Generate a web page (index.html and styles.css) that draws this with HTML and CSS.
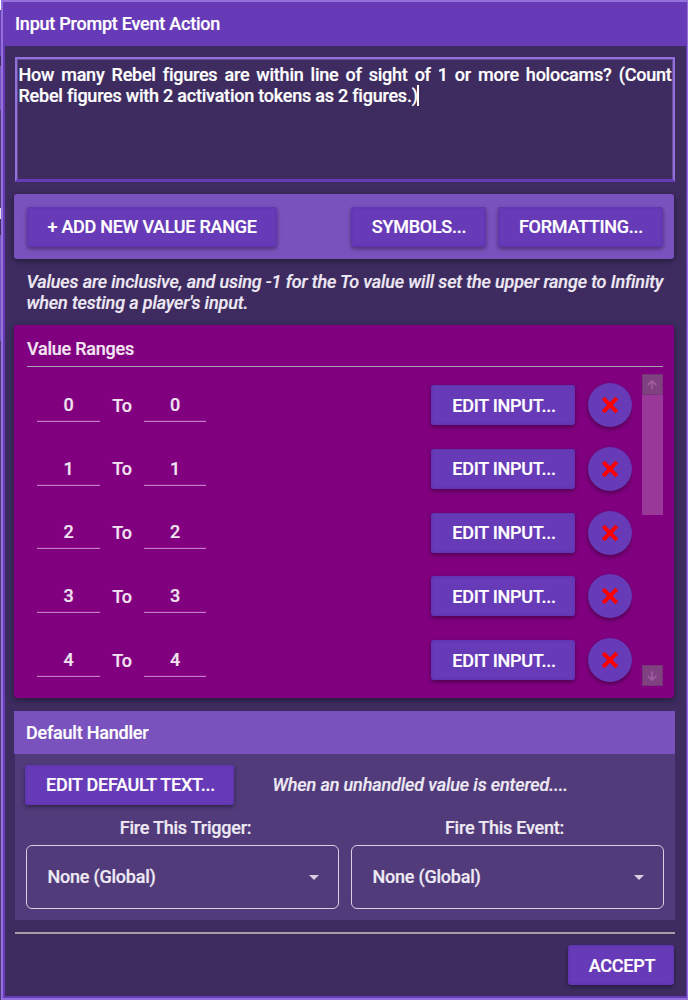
FILE: index.html
```
<!DOCTYPE html>
<html lang="en">
<head>
<meta charset="utf-8">
<title>Input Prompt Event Action</title>
<link rel="stylesheet" href="styles.css">
</head>
<body>
<div class="screen">
  <div class="backdrop"><i class="b1"></i><i class="b2"></i><i class="b3"></i><i class="b4"></i><i class="b5"></i><i class="b6"></i><i class="b7"></i><i class="b8"></i></div>
  <main class="window">
    <header class="titlebar">Input Prompt Event Action</header>
    <div class="content">
      <div class="prompt"><div class="line-justified">How many Rebel figures are within line of sight of 1 or more holocams? (Count</div><div class="line-end"><span class="prompt-end">Rebel figures with 2 activation tokens as 2 figures.)</span><span class="caret"></span></div></div>
      <section class="toolbar">
        <button class="btn add">+ ADD NEW VALUE RANGE</button>
        <button class="btn symbols">SYMBOLS...</button>
        <button class="btn formatting">FORMATTING...</button>
      </section>
      <p class="hint"><span class="hint-a">Values are inclusive, and using -1 for the To value will set the upper range to Infinity</span><br><span class="hint-b">when testing a player's input.</span></p>
      <section class="ranges">
        <h2 class="ranges-title">Value Ranges</h2>
        <div class="ranges-body">
          <div class="rows">
            <div class="row"><span class="num">0</span><span class="to">To</span><span class="num upper">0</span><button class="btn edit">EDIT INPUT...</button><button class="remove"><svg class="cross" viewBox="0 0 18 18"><path d="M2.2 2.2L15.8 15.8M15.8 2.2L2.2 15.8"/></svg></button></div>
            <div class="row"><span class="num">1</span><span class="to">To</span><span class="num upper">1</span><button class="btn edit">EDIT INPUT...</button><button class="remove"><svg class="cross" viewBox="0 0 18 18"><path d="M2.2 2.2L15.8 15.8M15.8 2.2L2.2 15.8"/></svg></button></div>
            <div class="row"><span class="num">2</span><span class="to">To</span><span class="num upper">2</span><button class="btn edit">EDIT INPUT...</button><button class="remove"><svg class="cross" viewBox="0 0 18 18"><path d="M2.2 2.2L15.8 15.8M15.8 2.2L2.2 15.8"/></svg></button></div>
            <div class="row"><span class="num">3</span><span class="to">To</span><span class="num upper">3</span><button class="btn edit">EDIT INPUT...</button><button class="remove"><svg class="cross" viewBox="0 0 18 18"><path d="M2.2 2.2L15.8 15.8M15.8 2.2L2.2 15.8"/></svg></button></div>
            <div class="row"><span class="num">4</span><span class="to">To</span><span class="num upper">4</span><button class="btn edit">EDIT INPUT...</button><button class="remove"><svg class="cross" viewBox="0 0 18 18"><path d="M2.2 2.2L15.8 15.8M15.8 2.2L2.2 15.8"/></svg></button></div>
          </div>
          <div class="scrollbar">
            <span class="arrow"><svg viewBox="0 0 21 21"><path d="M10 16V7M5.3 11.2L10 6.5L14.7 11.2"/></svg></span>
            <span class="thumb"></span>
            <span class="arrow down"><svg viewBox="0 0 21 21"><path d="M10 6V15M5.3 10.8L10 15.5L14.7 10.8"/></svg></span>
          </div>
        </div>
      </section>
      <section class="handler">
        <h2 class="handler-title">Default Handler</h2>
        <div class="handler-body">
          <div class="handler-top"><button class="btn default">EDIT DEFAULT TEXT...</button><em class="note">When an unhandled value is entered....</em></div>
          <div class="fields">
            <div class="field"><label class="label">Fire This Trigger:</label><div class="select"><span>None (Global)</span><svg class="chevron" viewBox="0 0 10 5"><path d="M0 0H10L5 5Z"/></svg></div></div>
            <div class="field"><label class="label event">Fire This Event:</label><div class="select"><span>None (Global)</span><svg class="chevron" viewBox="0 0 10 5"><path d="M0 0H10L5 5Z"/></svg></div></div>
          </div>
        </div>
      </section>
      <footer class="footer"><button class="btn accept">ACCEPT</button></footer>
    </div>
  </main>
</div>
</body>
</html>
```

FILE: styles.css
```
* { box-sizing: border-box; }
body { margin: 0; background: #3e2c61; color: #fff; font: 500 18px/21px Roboto, "Noto Sans", sans-serif; letter-spacing: -0.23px; -webkit-text-stroke: 0.2px; }
button { font: inherit; letter-spacing: -0.27px; color: inherit; border: 0; padding: 0; }
h2, p { margin: 0; font-size: inherit; font-weight: 500; }
.screen { display: flex; width: 688px; height: 1000px; overflow: hidden; }
.backdrop { flex: 0 0 1px; display: flex; flex-direction: column; background: #4f3a79; }
.backdrop i { width: 1px; }
.b1 { height: 10px; background: #fff; }
.b2 { height: 46px; background: #673ab7; }
.b3 { height: 10px; background: #3e2c61; }
.b4 { height: 44px; background: #7a52bd; }
.b5 { height: 98px; background: #4f3a79; }
.b6 { height: 11px; background: #e4e0eb; }
.b7 { height: 16px; background: #3e2c61; }
.b8 { height: 106px; background: #7a52bd; }
.window { flex: 0 0 687px; height: 1000px; border: 2px solid #9370db; border-right-width: 1px; background: #3e2c61; box-shadow: inset 2px 0 #673ab7, inset -1px 0 #673ab7, inset 0 -2px #673ab7; }
.titlebar { height: 44px; padding: 11px 12px; background: #673ab7; }
.content { display: flex; flex-direction: column; width: 683px; padding: 11px 12px 0 11px; }
.content > * { min-width: 0; }
.prompt { height: 125px; margin-left: 1px; margin-right: -1px; border: 2px solid #9370db; border-bottom: 3px solid #673ab7; padding: 5px 1.5px 0; box-shadow: inset 1px 1px #634b91, inset -1px 0 #634b91; }
.line-justified { white-space: nowrap; text-align: justify; text-align-last: justify; }
.line-end { display: flex; }
.caret { width: 2px; height: 21px; background: #fff; margin-left: -1px; }
.toolbar { display: flex; align-items: center; height: 65px; margin-top: 12px; padding: 0 11px 0 13px; background: #7a52bd; border-radius: 3px; box-shadow: 0 2px 6px #0007; }
.btn { height: 40px; padding-left: 1px; background: #673ab7; border-radius: 3px; box-shadow: 0 2px 4px #0006, inset 0 0 3px #512da899; white-space: nowrap; text-align: center; }
.add { width: 250px; margin-right: auto; padding-left: 0; }
.symbols { width: 135px; margin-right: 12px; }
.formatting { width: 165px; }
.hint { height: 42px; margin: 12px 0 12px 12.5px; font-style: italic; color: #eee9f3; white-space: nowrap; letter-spacing: -0.15px; }
.ranges { height: 373px; background: #800080; border-radius: 3px; box-shadow: 0 2px 6px #0007; padding: 13px 11px 12px 13px; }
.ranges-title { height: 29px; border-bottom: 1px solid #aaa0ac; color: #f2e6f2; }
.ranges-body { display: flex; justify-content: space-between; padding-top: 7px; }
.rows { width: 605px; height: 312px; overflow: hidden; }
.row { height: 63.75px; padding: 0 0 1.5px 10px; display: flex; align-items: center; }
.num { width: 63px; height: 34px; margin-bottom: 0.5px; padding-top: 6px; border-bottom: 1px solid #c080c0; color: #f0e4f0; text-align: center; box-shadow: inset 0 -1px #940f94; }
.upper { width: 62px; }
.to { width: 44px; text-align: center; color: #f0e4f0; }
.edit { width: 144px; margin-left: auto; padding-left: 2px; }
.remove { display: grid; place-items: center; width: 44px; height: 44px; margin: 0 0 0 13px; border-radius: 50%; background: #673ab7; box-shadow: 0 2px 4px #0006; }
.cross { width: 18px; height: 18px; stroke: #f00; stroke-width: 4; }
.scrollbar { display: flex; flex-direction: column; width: 21px; height: 312px; }
.arrow { width: 21px; height: 21px; background: #804180; border: 1px solid #773477; }
.arrow svg { display: block; width: 19px; height: 19px; fill: none; stroke: #a25ca2; stroke-width: 1.8; }
.thumb { height: 120px; background: #9a389a; }
.down { margin-top: auto; }
.handler { margin: 13px -1px 0 0; }
.handler-title { height: 43px; padding: 11px 12px; background: #7a52bd; }
.handler-body { height: 166px; margin-left: 1px; padding: 11px 11px 0; background: #513b7b; color: #eee9f3; }
.handler-top { display: flex; align-items: center; margin-left: -1px; }
.default { width: 209px; padding: 0 0 2px 2px; color: #fff; }
.note { margin-left: 38.5px; padding-bottom: 2px; letter-spacing: -0.14px; }
.fields { display: flex; gap: 12px; padding-top: 12px; }
.field { width: 313px; }
.label { display: block; height: 28px; padding-left: 6px; text-align: center; }
.event { padding: 0 6px 0 0; }
.select { height: 64px; display: flex; align-items: center; justify-content: space-between; padding: 0 19px 0 20.5px; border: 1px solid #d8cfe0; border-radius: 6px; }
.select span { padding-bottom: 2px; }
.chevron { width: 10px; height: 5px; fill: #d8cfe0; }
.footer { display: flex; justify-content: flex-end; margin: 12px -1px 0 1px; padding: 11px 1px 0 0; border-top: 2px solid #a39fa8; }
.accept { width: 106px; padding-left: 2px; }
```
